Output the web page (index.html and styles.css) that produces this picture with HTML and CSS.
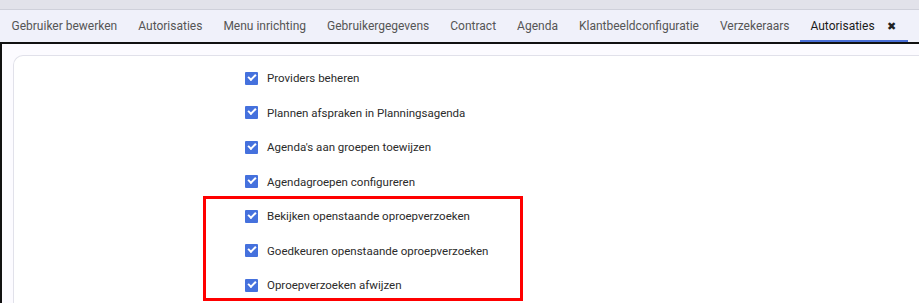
FILE: index.html
```html
<!DOCTYPE html>
<html>
<head>
  <meta charset="UTF-8">
  <title>Autorisaties</title>
  <link rel="stylesheet" href="styles.css">
</head>

<body>
  <div class="topstrip"></div>
  <div class="tabbar">
    <div class="tab">Gebruiker bewerken</div>
    <div class="tab">Autorisaties</div>
    <div class="tab">Menu inrichting</div>
    <div class="tab">Gebruikergegevens</div>
    <div class="tab">Contract</div>
    <div class="tab">Agenda</div>
    <div class="tab">Klantbeeldconfiguratie</div>
    <div class="tab">Verzekeraars</div>
    <div class="tab active">Autorisaties <span class="close">&#10006;</span></div>
  </div>

  <div class="content">
    <div class="card">
      <ul class="rights">
        <li><span class="check"></span>Providers beheren</li>
        <li><span class="check"></span>Plannen afspraken in Planningsagenda</li>
        <li><span class="check"></span>Agenda's aan groepen toewijzen</li>
        <li><span class="check"></span>Agendagroepen configureren</li>
        <li><span class="check"></span>Bekijken openstaande oproepverzoeken</li>
        <li><span class="check"></span>Goedkeuren openstaande oproepverzoeken</li>
        <li><span class="check"></span>Oproepverzoeken afwijzen</li>
      </ul>
    </div>
    <!-- highlight drawn over the last three rights -->
    <div class="highlight"></div>
  </div>
</body>
</html>
```

FILE: styles.css
```css
body {
  margin: 0;
  font-family: Roboto, "Liberation Sans", sans-serif;
  font-size: 12px;
  background: #fcfbff;
  overflow: hidden;
}

/* thin grey strip above the tabs */
.topstrip {
  height: 9px;
  background: #e2e2ea;
  border-bottom: 1px solid #cfd0da;
}

/************
 * tab bar  *
 ************/
.tabbar {
  display: flex;
  height: 32px;
  background: #f0f1fa;
  border-bottom: 2px solid #111;
  padding-left: 1px;
}
.tab {
  display: flex;
  align-items: center;
  padding: 0 10.5px;
  color: #555;
  white-space: nowrap;
}
.tab.active {
  color: #1c1c1c;
  box-shadow: inset 0 -2px 0 #4a6fd6;
  padding-right: 12px;
}
.close {
  margin-left: 12px;
  font-size: 11px;
  color: #222;
}

/*************
 * content   *
 *************/
.content {
  position: relative;
  border-left: 2px solid #111;
  padding: 11px 0 0 11px;
  height: 260px;
}
.card {
  background: #fff;
  border: 1px solid #e1e1ea;
  border-right: none;
  border-radius: 10px 0 0 0;
  height: 100%;
  padding: 0 0 0 231px;
}
.rights {
  list-style: none;
  margin: 0;
  padding: 5px 0 0 0;
  font-size: 11.5px;
}
.rights li {
  display: flex;
  align-items: center;
  height: 34.5px;
  color: #2b2b2b;
}
.check {
  width: 13px;
  height: 13px;
  margin-right: 9px;
  background: #4571dd;
  border-radius: 1px;
  position: relative;
}
.check:after {
  content: "";
  position: absolute;
  left: 3px;
  top: 2px;
  width: 6px;
  height: 3px;
  border-left: 2px solid #fff;
  border-bottom: 2px solid #fff;
  transform: rotate(-45deg);
}

/* red marking box */
.highlight {
  position: absolute;
  left: 201px;
  top: 152px;
  width: 314px;
  height: 99px;
  border: 3px solid #ff0000;
}
```
